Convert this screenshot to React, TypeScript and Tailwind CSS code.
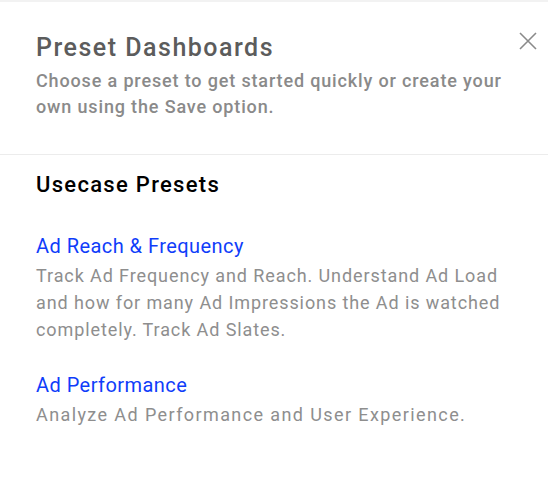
import React from 'react';

// Preset Dashboards — side panel with usecase presets

type Preset = { title: string; description: string; descClass: string };

const presets: Preset[] = [
    {
        title: 'Ad Reach & Frequency',
        description:
            'Track Ad Frequency and Reach. Understand Ad Load and how for many Ad Impressions the Ad is watched completely. Track Ad Slates.',
        descClass: 'tracking-[0.9px]',
    },
    {
        title: 'Ad Performance',
        description: 'Analyze Ad Performance and User Experience.',
        descClass: 'tracking-[1.4px]',
    },
];

export default function App() {
    return (
        <div className="min-h-screen w-full bg-white" style={{ fontFamily: 'Roboto, "Noto Sans", sans-serif' }}>
            <div className="h-[2px] bg-[#f2f2f2]" />

            {/* Header */}
            <div className="relative pl-9 pr-10 pt-[30px] pb-[34px]">
                <h2 className="text-[25px] leading-[32px] font-medium tracking-[1.5px] text-[#5c5c5c]">Preset Dashboards</h2>
                <p className="mt-1 text-[18px] leading-[26px] font-medium tracking-[0.85px] text-[#8a8a8a]">
                    Choose a preset to get started quickly or create your own using the Save option.
                </p>
                <button className="absolute top-[29px] right-[10px] w-5 h-5 flex items-center justify-center">
                    <svg width="20" height="20" viewBox="0 0 20 20" fill="none">
                        <path d="M2 2L18 18M18 2L2 18" stroke="#8a8a8a" strokeWidth="1.6" />
                    </svg>
                </button>
            </div>

            <div className="border-t border-[#ececec]" />

            {/* Presets */}
            <div className="pl-9 pr-10 pt-4">
                <h3 className="text-[22px] leading-[28px] font-medium tracking-[1.3px] text-black">Usecase Presets</h3>
                {presets.map((p, i) => (
                    <div key={p.title} className={i === 0 ? 'mt-[33px]' : 'mt-[28px]'}>
                        <a className="block text-[20px] leading-[28px] tracking-[0.45px] text-[#0f3dfa] cursor-pointer">{p.title}</a>
                        <p className={`mt-[2px] text-[18px] leading-[27px] text-[#8e8e8e] ${p.descClass}`}>{p.description}</p>
                    </div>
                ))}
            </div>
        </div>
    );
}
